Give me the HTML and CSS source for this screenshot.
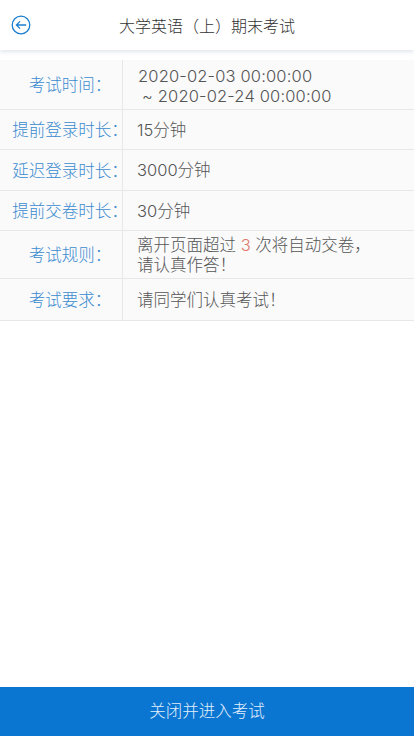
FILE: index.html
```html
<!DOCTYPE html>
<html lang="zh-CN">
<head>
<meta charset="utf-8">
<title>大学英语（上）期末考试</title>
<link rel="stylesheet" href="styles.css">
</head>
<body>
<div class="page">
  <header class="topbar">
    <svg class="back" viewBox="0 0 20 20" width="20" height="20" aria-hidden="true">
      <circle cx="10" cy="10" r="8.8" fill="none" stroke="#1b7fd0" stroke-width="1.3"/>
      <path d="M15.2 10H5.4M9 6.4L5.4 10L9 13.6" fill="none" stroke="#1b7fd0" stroke-width="1.3"/>
    </svg>
    <h1 class="title">大学英语（上）期末考试</h1>
  </header>
  <main class="info">
    <div class="row r1"><div class="label">考试时间：</div><div class="value time">2020-02-03 00:00:00<br><span class="tilde">~ </span>2020-02-24 00:00:00</div></div>
    <div class="row r2"><div class="label">提前登录时长：</div><div class="value">15分钟</div></div>
    <div class="row r3"><div class="label">延迟登录时长：</div><div class="value">3000分钟</div></div>
    <div class="row r4"><div class="label">提前交卷时长：</div><div class="value">30分钟</div></div>
    <div class="row r5"><div class="label">考试规则：</div><div class="value rule">离开页面超过 <span class="count">3</span> 次将自动交卷，<br>请认真作答！</div></div>
    <div class="row r6"><div class="label">考试要求：</div><div class="value rule">请同学们认真考试！</div></div>
  </main>
  <button class="enter" type="button">关闭并进入考试</button>
</div>
</body>
</html>
```
FILE: styles.css
```css
* { box-sizing: border-box; }
html, body { margin: 0; height: 100%; }
body {
  background: #fff;
  color: #555;
  font-family: Inter, "Noto Sans CJK SC", sans-serif;
  font-weight: 300;
}
.page { display: flex; flex-direction: column; height: 736px; overflow: hidden; }
.topbar {
  height: 50px;
  flex: none;
  display: flex;
  align-items: center;
  justify-content: center;
  position: relative;
  background: #fff;
  box-shadow: 0 2px 4px rgba(170, 180, 200, .35);
}
.back { position: absolute; left: 11px; top: 15px; }
.title { margin: 0; font-size: 16px; font-weight: 300; color: #333; }
.info {
  flex: 1;
  margin-top: 10px;
}
.row {
  display: grid;
  grid-template-columns: 123px 1fr;
  background: #fafafa;
  border-bottom: 1px solid #e8e8e8;
}
.r1 { height: 50px; }
.r2 { height: 40px; }
.r3 { height: 41px; }
.r4 { height: 40px; }
.r5 { height: 48px; }
.r6 { height: 42px; }
.label {
  display: flex;
  align-items: center;
  justify-content: center;
  padding: 0 0 1px 18px;
  border-right: 1px solid #e8e8e8;
  color: #3a8bd0;
  font-size: 16.5px;
  white-space: nowrap;
}
.value {
  align-self: center;
  padding-left: 14px;
  font-size: 16.5px;
  line-height: 20px;
}
.time { padding: 2px 0 0 15px; letter-spacing: .16px; }
.rule { padding: 1px 0 0 14px; }
.count { color: #e0786c; }
.tilde { padding-left: 4px; }
.enter {
  flex: none;
  height: 49px;
  padding: 0 0 3px;
  border: 0;
  background: #0a76d2;
  color: #e2effb;
  font: inherit;
  font-size: 16.5px;
}
```
